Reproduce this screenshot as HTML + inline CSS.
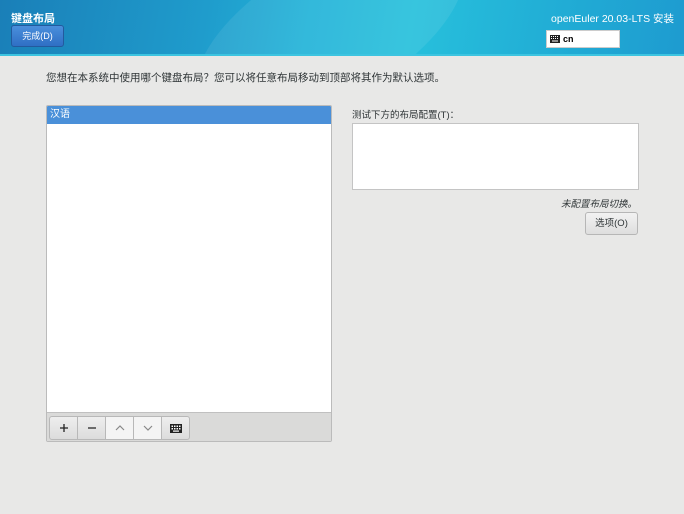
<!DOCTYPE html>
<html><head><meta charset="utf-8"><style>
*{margin:0;padding:0;box-sizing:border-box}
body{width:684px;height:514px;background:#e8e8e7;font-family:"Liberation Sans","Noto Sans CJK SC",sans-serif;font-size:10px;color:#2e3436;position:relative;overflow:hidden}
.hdr{position:absolute;left:0;top:0;width:684px;height:56px;background:linear-gradient(100deg,#1a7fb8 0%,#1f9ccc 30%,#22b3d8 45%,#27c0dc 60%,#20a9d4 85%,#1e9bd0 100%);border-bottom:2px solid #3cc4e0;overflow:hidden}
.hdr .sw{position:absolute;left:180px;top:-40px;width:300px;height:140px;border-radius:50%;background:rgba(255,255,255,0.08);transform:rotate(-30deg)}
.t{position:absolute;left:11px;top:10px;color:#fff;font-weight:bold;font-size:11px}
.done{position:absolute;left:11px;top:25px;width:53px;height:22px;background:linear-gradient(#4a8fdc,#2f6fc4);border:1px solid #235a9e;border-radius:3px;color:#fff;font-size:9px;text-align:center;line-height:20px}
.os{position:absolute;right:10px;top:11px;color:#fff;font-size:10.5px}
.kb{position:absolute;left:546px;top:30px;width:74px;height:18px;background:#fff;border:1px solid #ccc;font-size:9px;line-height:16px;padding-left:16px;color:#000;font-weight:bold}
.kb svg{position:absolute;left:3px;top:4px}
.intro{position:absolute;left:46px;top:70px;font-size:10.5px}
.list{position:absolute;left:46px;top:105px;width:286px;height:337px;background:#fff;border:1px solid #bbb;border-radius:2px;overflow:hidden}
.sel{height:18px;background:#4a90d9;color:#fff;line-height:18px;padding-left:3px;font-size:10px}
.tb{position:absolute;left:0;bottom:0;width:100%;height:29px;background:#dadad9;border-top:1px solid #c0c0c0}
.btn{position:absolute;top:3px;width:29px;height:24px;border:1px solid #b8b8b8;background:linear-gradient(#eee,#dcdcdc);text-align:center;line-height:22px;font-size:13px;color:#222}
.btn svg{display:block;margin:auto}
.lbl{position:absolute;left:352px;top:107px;font-size:9.5px}
.ta{position:absolute;left:352px;top:123px;width:287px;height:67px;background:#fff;border:1px solid #c4c4c4}
.nc{position:absolute;right:47px;top:196px;font-style:italic;font-size:9.5px}
.opt{position:absolute;left:585px;top:212px;width:53px;height:23px;border:1px solid #b6b6b6;border-radius:3px;background:linear-gradient(#f2f2f2,#dedede);text-align:center;line-height:21px;font-size:9.5px}
</style></head><body>
<div class="hdr"><div class="sw"></div>
<div class="t">键盘布局</div><div class="done">完成(D)</div>
<div class="os">openEuler 20.03-LTS 安装</div>
<div class="kb"><svg width="10" height="8"><rect width="10" height="8" fill="#222"/><g fill="#fff"><rect x="1" y="1" width="1" height="1"/><rect x="3" y="1" width="1" height="1"/><rect x="5" y="1" width="1" height="1"/><rect x="7" y="1" width="1" height="1"/><rect x="1" y="3" width="1" height="1"/><rect x="3" y="3" width="1" height="1"/><rect x="5" y="3" width="1" height="1"/><rect x="7" y="3" width="1" height="1"/><rect x="2" y="5.5" width="6" height="1"/></g></svg>cn</div></div>
<div class="intro">您想在本系统中使用哪个键盘布局？您可以将任意布局移动到顶部将其作为默认选项。</div>
<div class="list"><div class="sel">汉语</div>
<div class="tb">
<div class="btn" style="left:2px;border-radius:3px 0 0 3px"><svg width="10" height="22"><path d="M1 11H9M5 7V15" stroke="#222" stroke-width="1.3"/></svg></div>
<div class="btn" style="left:30px"><svg width="10" height="22"><path d="M1 11H9" stroke="#222" stroke-width="1.3"/></svg></div>
<div class="btn" style="left:58px;background:#f4f4f4"><svg width="10" height="22"><path d="M1 13L5 9L9 13" fill="none" stroke="#888" stroke-width="1.2"/></svg></div>
<div class="btn" style="left:86px;background:#f4f4f4"><svg width="10" height="22"><path d="M1 9L5 13L9 9" fill="none" stroke="#888" stroke-width="1.2"/></svg></div>
<div class="btn" style="left:114px;border-radius:0 3px 3px 0"><svg width="12" height="9" style="margin-top:7px"><rect x="0" y="0" width="12" height="9" fill="#222"/><g fill="#fff"><rect x="1.5" y="1.5" width="1.5" height="1.5"/><rect x="4" y="1.5" width="1.5" height="1.5"/><rect x="6.5" y="1.5" width="1.5" height="1.5"/><rect x="9" y="1.5" width="1.5" height="1.5"/><rect x="1.5" y="4" width="1.5" height="1.5"/><rect x="4" y="4" width="1.5" height="1.5"/><rect x="6.5" y="4" width="1.5" height="1.5"/><rect x="9" y="4" width="1.5" height="1.5"/><rect x="3" y="6.5" width="6" height="1.2"/></g></svg></div>
</div></div>
<div class="lbl">测试下方的布局配置(T)：</div>
<div class="ta"></div>
<div class="nc">未配置布局切换。</div>
<div class="opt">选项(O)</div>
</body></html>
